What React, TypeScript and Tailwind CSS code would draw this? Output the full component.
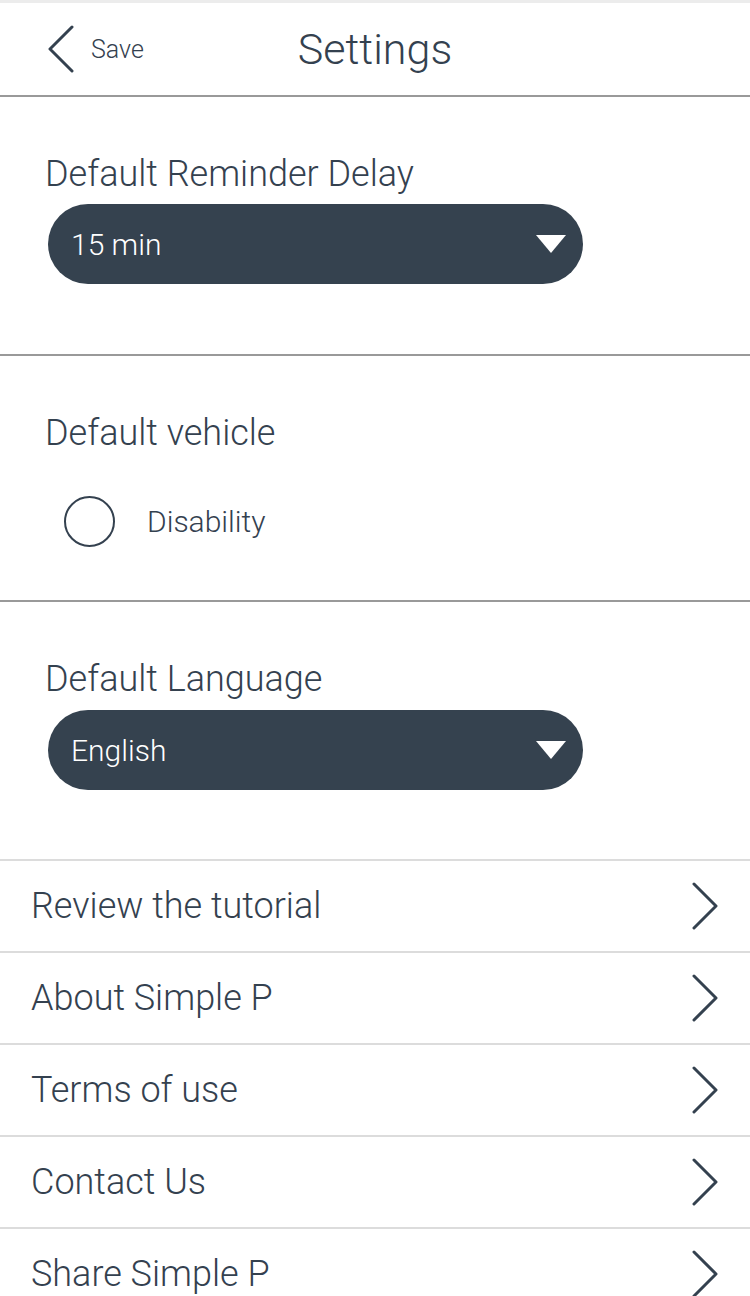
import React from "react";

const font = { fontFamily: "Roboto, 'Open Sans', sans-serif" };

// Select pill used for reminder delay and language
const SelectPill: React.FC<{ value: string }> = ({ value }) => (
  <div className="ml-[3px] flex h-[80px] w-[535px] items-center justify-between rounded-full bg-[#35424f] pl-[23px] pr-[17px]">
    <span className="text-[30px] font-light text-white">{value}</span>
    <svg width="30" height="18" viewBox="0 0 30 18">
      <polygon points="0,0 30,0 15,18" fill="#fff" />
    </svg>
  </div>
);

const Chevron: React.FC<{ dir: "left" | "right"; className?: string }> = ({ dir, className }) => (
  <svg width="28" height="48" viewBox="0 0 28 48" className={className}>
    <polyline
      points={dir === "left" ? "25,2 3,24 25,46" : "3,2 25,24 3,46"}
      fill="none"
      stroke="#34414f"
      strokeWidth="3"
      strokeLinecap="round"
      strokeLinejoin="round"
    />
  </svg>
);

const rows = ["Review the tutorial", "About Simple P", "Terms of use", "Contact Us", "Share Simple P"];

export default function App() {
  return (
    <div className="h-[1296px] w-[750px] overflow-hidden bg-white font-light text-[#34414f]" style={font}>
      {/* Header */}
      <div className="h-[3px] bg-[#ececec]" />
      <div className="relative flex h-[94px] items-center border-b-2 border-[#999]">
        <div className="flex items-center pl-[47px]">
          <Chevron dir="left" />
          <span className="ml-[16px] text-[25px] font-light leading-none">Save</span>
        </div>
        <div className="absolute left-0 right-0 top-[21px] text-center text-[43px] leading-[50px]">Settings</div>
      </div>

      {/* Default Reminder Delay */}
      <div className="h-[259px] border-b-2 border-[#999] pl-[45px] pt-[57px]">
        <div className="text-[36px] leading-[40px]">Default Reminder Delay</div>
        <div className="mt-[10px]">
          <SelectPill value="15 min" />
        </div>
      </div>

      {/* Default vehicle */}
      <div className="h-[246px] border-b-2 border-[#999] pl-[45px] pt-[57px]">
        <div className="text-[36px] leading-[40px]">Default vehicle</div>
        <div className="mt-[43px] flex items-center pl-[19px]">
          <div className="h-[51px] w-[51px] rounded-full border-2 border-[#34414f]" />
          <span className="ml-[32px] text-[30px] leading-none">Disability</span>
        </div>
      </div>

      {/* Default Language */}
      <div className="h-[257px] pl-[45px] pt-[57px]">
        <div className="text-[36px] leading-[40px]">Default Language</div>
        <div className="mt-[11px]">
          <SelectPill value="English" />
        </div>
      </div>

      {/* Links */}
      <div>
        {rows.map((r) => (
          <div key={r} className="flex h-[92px] items-center justify-between border-t-2 border-[#dcdcdc] pl-[31px] pr-[31px]">
            <span className="text-[36px] leading-none">{r}</span>
            <Chevron dir="right" />
          </div>
        ))}
      </div>
    </div>
  );
}
